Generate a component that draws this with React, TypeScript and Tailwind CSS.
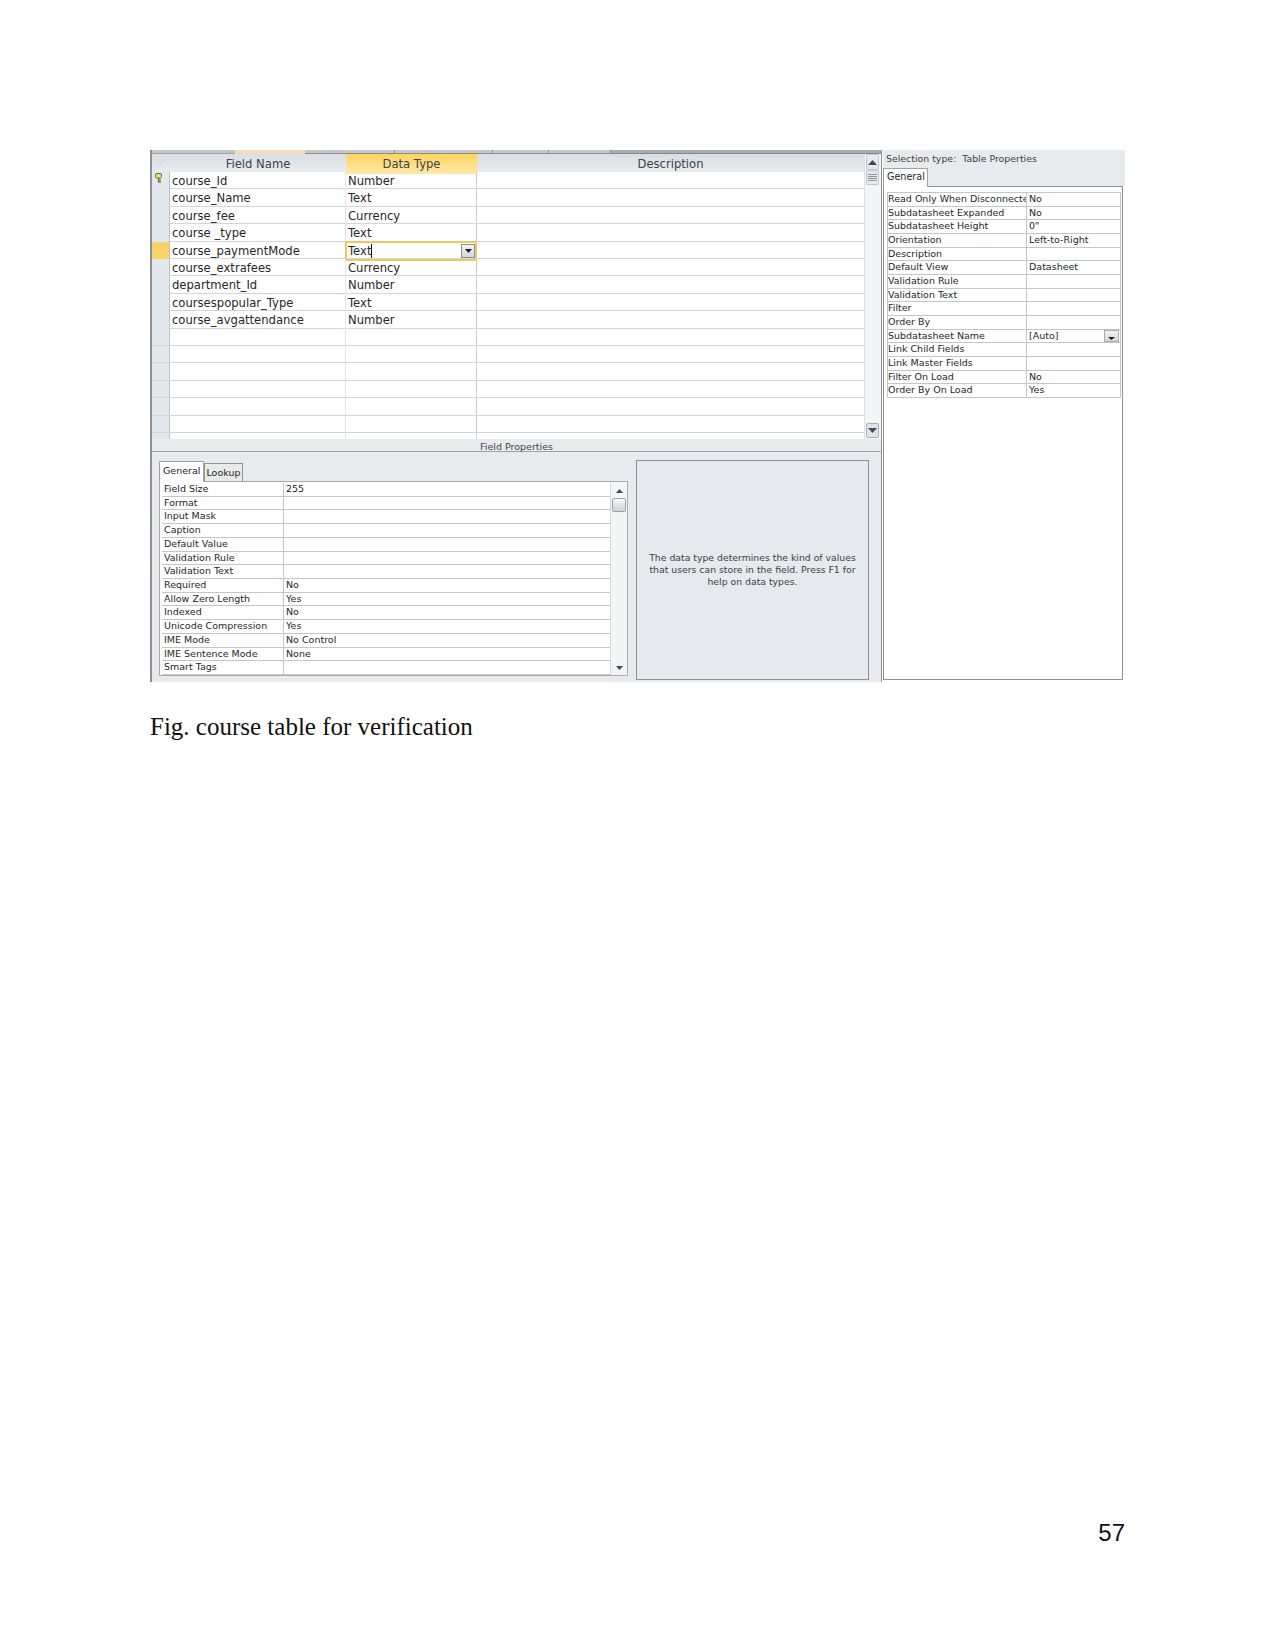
const fields = [
  ["course_Id", "Number"],
  ["course_Name", "Text"],
  ["course_fee", "Currency"],
  ["course _type", "Text"],
  ["course_paymentMode", "Text"],
  ["course_extrafees", "Currency"],
  ["department_Id", "Number"],
  ["coursespopular_Type", "Text"],
  ["course_avgattendance", "Number"],
  ["", ""],
  ["", ""],
  ["", ""],
  ["", ""],
  ["", ""],
  ["", ""],
  ["", ""],
];

const fieldProps = [
  ["Field Size", "255"],
  ["Format", ""],
  ["Input Mask", ""],
  ["Caption", ""],
  ["Default Value", ""],
  ["Validation Rule", ""],
  ["Validation Text", ""],
  ["Required", "No"],
  ["Allow Zero Length", "Yes"],
  ["Indexed", "No"],
  ["Unicode Compression", "Yes"],
  ["IME Mode", "No Control"],
  ["IME Sentence Mode", "None"],
  ["Smart Tags", ""],
];

const tableProps = [
  ["Read Only When Disconnected", "No"],
  ["Subdatasheet Expanded", "No"],
  ["Subdatasheet Height", '0"'],
  ["Orientation", "Left-to-Right"],
  ["Description", ""],
  ["Default View", "Datasheet"],
  ["Validation Rule", ""],
  ["Validation Text", ""],
  ["Filter", ""],
  ["Order By", ""],
  ["Subdatasheet Name", "[Auto]"],
  ["Link Child Fields", ""],
  ["Link Master Fields", ""],
  ["Filter On Load", "No"],
  ["Order By On Load", "Yes"],
];

function Arrow({ down = false, className = "" }: { down?: boolean; className?: string }) {
  return (
    <svg width="9" height="5" viewBox="0 0 9 5" className={className}>
      <path d={down ? "M0 0H9L4.5 5Z" : "M0 5H9L4.5 0Z"} fill="#3f4a5c" />
    </svg>
  );
}

function KeyIcon() {
  return (
    <svg width="7" height="10" viewBox="0 0 7 10">
      <rect x="0.5" y="0.5" width="6" height="4.5" rx="1.5" fill="#e6e07e" stroke="#6f7430" />
      <path d="M3.5 5V9.5M3.5 7.2H6M3.5 9.2H6" stroke="#6f7430" strokeWidth="1.2" fill="none" />
    </svg>
  );
}

function DropButton({ className = "" }: { className?: string }) {
  return (
    <div className={`flex items-center justify-center border border-[#8b8f94] bg-gradient-to-b from-[#f3f4f5] to-[#d4d7db] ${className}`}>
      <svg width="7" height="4" viewBox="0 0 7 4">
        <path d="M0 0H7L3.5 4Z" fill="#1c1c1c" />
      </svg>
    </div>
  );
}

function PropRows({ rows, labelWidth, rowClass, labelPad }: { rows: string[][]; labelWidth: string; rowClass: string; labelPad: string }) {
  return (
    <>
      {rows.map(([label, value]) => (
        <div key={label} className={`flex border-b border-[#c4c7ca] ${rowClass}`}>
          <div className={`${labelWidth} ${labelPad} shrink-0 overflow-hidden whitespace-nowrap border-r border-[#c4c7ca] text-[#23272b]`}>
            {label}
          </div>
          <div className="flex flex-1 items-start justify-between pl-[2px] text-[#23272b]">
            <span>{value}</span>
            {label === "Subdatasheet Name" && (
              <div className="mr-[1px] flex h-[12px] w-[15px] items-end justify-center border border-[#a8abaf] bg-gradient-to-b from-[#f3f4f5] to-[#d4d7db] pb-[1px]">
                <svg width="7" height="3" viewBox="0 0 7 3">
                  <path d="M0 0H7L3.5 3Z" fill="#1c1c1c" />
                </svg>
              </div>
            )}
          </div>
        </div>
      ))}
    </>
  );
}

export default function App() {
  return (
    <div className="flex h-[1651px] w-[1275px] flex-col overflow-hidden bg-white pl-[150px] pr-[150px] font-['DejaVu_Sans',sans-serif]">
      <div className="mt-[150px] flex h-[532px] shrink-0">
        {/* Table design pane */}
        <div className="flex w-[732px] shrink-0 flex-col border-l-2 border-r border-[#8e9094] bg-[#e8ebee]">
          {/* document tabs strip */}
          <div className="flex h-[4px] shrink-0 text-[0px]">
            <div className="w-[83px] border-b border-[#a5a7a9] bg-[#c2c4c5]" />
            <div className="w-[70px] bg-[#f2dfb9]" />
            <div className="w-[90px] border-r border-b border-[#8b8d90] bg-[#c6c8c9]" />
            <div className="w-[98px] border-r border-b border-[#8b8d90] bg-[#c6c8c9]" />
            <div className="w-[56px] border-r border-b border-[#8b8d90] bg-[#c6c8c9]" />
            <div className="w-[62px] border-r border-b border-[#8b8d90] bg-[#c6c8c9]" />
            <div className="flex-1 border-b border-[#85878a] bg-[#a9abae]" />
          </div>

          <div className="flex h-[285px] shrink-0">
            <div className="w-[712px] shrink-0 overflow-hidden bg-white text-[11.6px] text-[#25282c]">
              <div className="grid h-[18px] grid-cols-[18px_176px_131px_1fr] bg-gradient-to-b from-[#d8dee3] to-[#e8ecef] text-center leading-[20px] text-[#3c4248]">
                <div className="flex items-center justify-center pb-[4px]">
                  <svg width="9" height="9" viewBox="0 0 9 9">
                    <path d="M1 8L8 1" stroke="#c8ced3" strokeWidth="1" />
                  </svg>
                </div>
                <div>Field Name</div>
                <div className="bg-gradient-to-b from-[#fdd35c] to-[#fee9a6]">Data Type</div>
                <div>Description</div>
              </div>
              {fields.map(([name, type], i) => (
                <div key={i} className="grid h-[17.42px] grid-cols-[18px_176px_131px_1fr] border-b border-[#d3d6d9] leading-[18px]">
                  <div className={`flex items-start justify-start border-r border-[#bcc1c6] pl-[3px] pt-[1px] ${i === 4 ? "bg-[#fbd26a]" : "bg-[#e3e8ed]"}`}>
                    {i === 0 && <KeyIcon />}
                  </div>
                  <div className="border-r border-[#e3e5e7] pl-[2px]">{name}</div>
                  {i === 4 ? (
                    <div className="-my-[1px] -ml-[1px] flex items-center justify-between border-2 border-[#f0c95a] pl-[1px]">
                      <span className="border-r border-[#111] leading-[14px]">{type}</span>
                      <DropButton className="h-[14px] w-[14px]" />
                    </div>
                  ) : (
                    <div className="border-r border-[#c9ccd0] pl-[2px]">{type}</div>
                  )}
                  <div />
                </div>
              ))}
            </div>

            {/* scrollbar */}
            <div className="flex flex-1 flex-col items-center border-l border-[#dfe2e5] bg-[#f3f5f7] pl-[1px] pr-[2px]">
              <div className="flex h-[16px] w-full items-center justify-center rounded-[2px] border border-[#c3c8cd] bg-[#e6eaee]">
                <Arrow />
              </div>
              <div className="flex h-[15px] w-full flex-col items-center justify-center gap-[1px] rounded-[2px] border border-[#c3c8cd] bg-[#e6eaee]">
                <div className="h-[1px] w-[9px] bg-[#8d9298]" />
                <div className="h-[1px] w-[9px] bg-[#8d9298]" />
                <div className="h-[1px] w-[9px] bg-[#8d9298]" />
                <div className="h-[1px] w-[9px] bg-[#8d9298]" />
              </div>
              <div className="mt-auto mb-[1px] flex h-[15px] w-full items-center justify-center rounded-[2px] border border-[#a9afb6] bg-[#dfe4e9]">
                <Arrow down />
              </div>
            </div>
          </div>

          <div className="h-[13px] shrink-0 border-b border-[#9ea1a4] pl-[328px] pt-[1px] text-[9.5px] leading-[13px] text-[#41464b]">
            Field Properties
          </div>

          {/* Field properties */}
          <div className="flex min-h-0 flex-1 pl-[7px] pt-[8px]">
            <div className="flex w-[469px] shrink-0 flex-col">
              <div className="flex h-[21px] shrink-0 items-end text-[9.5px] text-[#23272b]">
                <div className="z-10 -mb-[1px] h-[21px] w-[45px] border border-b-0 border-[#a0a3a6] bg-white pl-[3px] leading-[17px]">General</div>
                <div className="h-[18px] w-[39px] border border-b-0 border-[#8f9296] bg-[#e9ebe6] text-center leading-[18px]">Lookup</div>
              </div>
              <div className="flex h-[195px] border border-[#a9acaf] bg-white pl-[2px] text-[9.5px] leading-[12px]">
                <div className="w-[448px] shrink-0 pt-[1px]">
                  <PropRows rows={fieldProps} labelWidth="w-[122px]" labelPad="pl-[2px]" rowClass="h-[13.73px]" />
                </div>
                <div className="flex flex-1 flex-col items-center border-l border-[#d5d8db] bg-[#f3f5f7] pt-[7px]">
                  <Arrow className="h-[4px] w-[7px]" />
                  <div className="mt-[5px] h-[14px] w-[14px] rounded-[2px] border border-[#9da2a7] bg-gradient-to-b from-[#f5f6f7] to-[#cfd3d7]" />
                  <Arrow down className="mt-auto mb-[5px] h-[4px] w-[7px]" />
                </div>
              </div>
            </div>
            <div className="ml-[8px] flex h-[220px] w-[233px] items-center justify-center border border-[#8e9296] bg-[#e6e9ed] px-[8px] text-center text-[9.3px] leading-[12px] text-[#3c4045]">
              <p>The data type determines the kind of values that users can store in the field. Press F1 for help on data types.</p>
            </div>
          </div>
        </div>

        <div className="w-[1px] shrink-0 bg-white" />

        {/* Property sheet */}
        <div className="flex w-[242px] shrink-0 flex-col">
          <div className="h-[18px] shrink-0 bg-[#e8ebee] pl-[3px] pt-[1px] text-[9.4px] leading-[16px] text-[#3c4045]">
            Selection type:&nbsp; Table Properties
          </div>
          <div className="flex h-[18px] shrink-0 bg-[#e8ebee]">
            <div className="z-10 -mb-[1px] h-[19px] w-[45px] border border-b-0 border-[#a0a3a6] bg-white pl-[3px] text-[9.6px] leading-[16px] text-[#23272b]">
              General
            </div>
          </div>
          <div className="mb-[2px] mr-[2px] flex-1 border border-[#8e9296] bg-white pl-[3px] pt-[5px] text-[9.5px] leading-[12px]">
            <div className="w-[234px] border border-b-0 border-[#c4c7ca]">
              <PropRows rows={tableProps} labelWidth="w-[139px]" labelPad="" rowClass="h-[13.67px]" />
            </div>
          </div>
        </div>
      </div>

      <p className="mt-[31px] font-['Liberation_Serif',serif] text-[25px] leading-[28px] text-[#111]">
        Fig. course table for verification
      </p>

      <div className="mt-auto pb-[104px] text-right font-['Liberation_Sans',sans-serif] text-[24px] leading-[28px] text-[#111]">
        57
      </div>
    </div>
  );
}
